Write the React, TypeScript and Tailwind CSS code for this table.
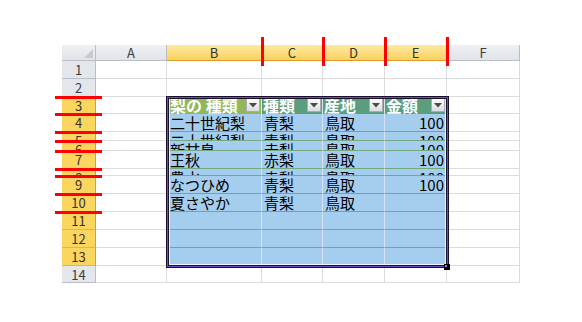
import React from "react";

const FONT = { fontFamily: '"Noto Sans CJK JP", "Noto Sans", sans-serif' };

const data: Record<number, string[]> = {
  4: ["二十世紀梨", "青梨", "鳥取", "100"],
  5: ["二十世紀梨", "青梨", "鳥取", "100"],
  6: ["新甘泉", "赤梨", "鳥取", "100"],
  7: ["王秋", "赤梨", "鳥取", "100"],
  8: ["豊水", "赤梨", "鳥取", "100"],
  9: ["なつひめ", "青梨", "鳥取", "100"],
  10: ["夏さやか", "青梨", "鳥取", ""],
};

const headers = ["梨の 種類", "種類", "産地", "金額"];
const cols = ["A", "B", "C", "D", "E", "F"];
const rows = Array.from({ length: 14 }, (_, i) => i + 1);

function Dropdown() {
  return (
    <div className="absolute right-[1px] top-[1px] flex h-[14px] w-[14px] items-center justify-center border border-[#a9adb3] bg-linear-to-b from-[#fbfbfb] to-[#dcdde0]">
      <svg width="8" height="5" viewBox="0 0 8 5">
        <path d="M0 0 L8 0 L4 4.5 Z" fill="#4a4a4a" />
      </svg>
    </div>
  );
}

function Cell({ r, c }: { r: number; c: number }) {
  const inTable = c >= 1 && c <= 4 && r >= 3 && r <= 13;
  if (!inTable) {
    return <div className="border-r border-b border-[#dadcdd] bg-white" />;
  }
  if (r === 3) {
    return (
      <div
        className={
          c === 1
            ? "relative overflow-hidden whitespace-pre border-r border-[#e3ecd6] bg-[#93b65a] pl-[3px] text-[16px] font-bold leading-[17px] text-white"
            : "relative overflow-hidden whitespace-pre border-r border-[#dbe8e0] bg-[#5b9e7d] pl-[1px] text-[16px] font-bold leading-[17px] text-white"
        }
      >
        {headers[c - 1]}
        <Dropdown />
      </div>
    );
  }
  const vals = data[r];
  const v = vals ? vals[c - 1] : "";
  return (
    <div
      className={
        c === 4
          ? "overflow-hidden border-r border-b border-r-[#d3e3f3] border-b-[#72a884] bg-[#a4cdee] pr-[2px] text-right text-[15px] leading-[18px] text-black"
          : c === 1
          ? "overflow-hidden border-r border-b border-r-[#d3e3f3] border-b-[#72a884] bg-[#a4cdee] pl-[3px] text-[15px] leading-[18px] text-black"
          : "overflow-hidden border-r border-b border-r-[#d3e3f3] border-b-[#72a884] bg-[#a4cdee] pl-[2px] text-[15px] leading-[18px] text-black"
      }
    >
      <span className="whitespace-nowrap">{v}</span>
    </div>
  );
}

export default function App() {
  const vLines = [261, 322, 384, 446];
  const hLines = [96, 113, 131, 140, 150, 168, 175, 193, 211];
  return (
    <div className="relative h-[322px] w-[582px] overflow-hidden bg-white" style={FONT}>
      <div className="pl-[62px] pt-[45px]">
        <div className="grid w-[458px] grid-cols-[34px_71px_95px_61px_62px_62px_73px] grid-rows-[16px_18px_18px_17px_18px_9px_10px_18px_7px_18px_18px_18px_18px_18px_17px]">
          {/* corner */}
          <div className="relative border-r border-b border-[#b9bec7] bg-linear-to-b from-[#eef0f3] to-[#e1e4e8]">
            <svg className="absolute right-[2px] bottom-[2px]" width="9" height="9" viewBox="0 0 9 9">
              <path d="M9 0 L9 9 L0 9 Z" fill="#c6cad0" />
            </svg>
          </div>
          {cols.map((l, i) =>
            i >= 1 && i <= 4 ? (
              <div
                key={l}
                className="flex items-center justify-center border-r border-b border-r-[#e2b457] border-b-[#e09b2c] bg-linear-to-b from-[#fdeaa0] to-[#f9d25c] text-[13px] leading-none text-[#333]"
              >
                {l}
              </div>
            ) : (
              <div
                key={l}
                className="flex items-center justify-center border-r border-b border-[#b9bec7] bg-linear-to-b from-[#eef0f3] to-[#e1e4e8] text-[13px] leading-none text-[#3c3c3c]"
              >
                {l}
              </div>
            )
          )}
          {rows.map((r) => (
            <React.Fragment key={r}>
              {r >= 3 && r <= 13 ? (
                <div className="overflow-hidden border-r border-b border-r-[#e09b2c] border-b-[#e2b457] bg-[#fbd65f] text-center text-[13px] leading-[18px] text-[#333]">
                  {r}
                </div>
              ) : (
                <div className="overflow-hidden border-r border-b border-[#b9bec7] bg-[#e3e6ea] text-center text-[13px] leading-[18px] text-[#3c3c3c]">
                  {r}
                </div>
              )}
              {cols.map((_, c) => (
                <Cell key={c} r={r} c={c} />
              ))}
            </React.Fragment>
          ))}
        </div>
      </div>

      {/* selection border of the table */}
      <div className="absolute left-[166px] top-[96px] h-[172px] w-[283px] border border-[#1c1030]">
        <div className="h-full w-full border border-[#6a50c2]">
          <div className="h-full w-full border border-[#1c1030]">
            <div className="h-full w-full border-x border-b border-white/80 border-t-0" />
          </div>
        </div>
      </div>
      {/* fill handle */}
      <div className="absolute left-[444px] top-[264px] h-[6px] w-[6px] bg-black">
        <div className="m-[1px] h-[2px] w-[2px] bg-[#8c86b0]" />
      </div>

      {/* red annotation lines */}
      {vLines.map((x) => (
        <div key={x} className="absolute top-[37px] h-[29px] w-[3px] bg-[#ff0000]" style={{ left: x }} />
      ))}
      {hLines.map((y) => (
        <div key={y} className="absolute left-[55px] h-[3px] w-[47px] bg-[#ff0000]" style={{ top: y }} />
      ))}
    </div>
  );
}
